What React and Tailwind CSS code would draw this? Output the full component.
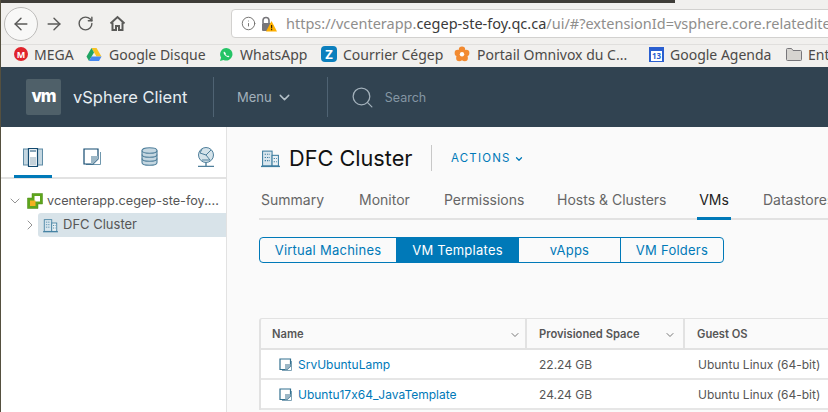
import { ArrowLeft, ArrowRight, RotateCw, Info, ChevronDown, ChevronRight, Search } from "lucide-react";

const uiFont = "font-['Noto_Sans',sans-serif]";
const appFont = "font-['Inter',sans-serif] [font-feature-settings:'calt'_0]";

const HomeIcon = () => (
   <svg width="17" height="17" viewBox="0 0 17 17" fill="none" stroke="#5a5a58" strokeWidth="2">
      <path d="M1.5 8.5 8.5 2l7 6.5" />
      <path d="M3.5 7.5V15h3.5v-4h3v4h3.5V7.5" />
   </svg>
);

const LockWarning = () => (
   <svg width="16" height="16" viewBox="0 0 16 16">
      <path d="M2 7V4.5a3 3 0 0 1 6 0V7" fill="none" stroke="#77767a" strokeWidth="1.6" />
      <rect x="1" y="7" width="9" height="8" rx="1" fill="#77767a" />
      <path d="M10.5 5 16 15.5H5z" fill="#ffb000" />
      <rect x="10" y="9" width="1.2" height="3.4" fill="#3a2a00" />
      <rect x="10" y="13" width="1.2" height="1.2" fill="#3a2a00" />
   </svg>
);

const Mega = () => (
   <span className="w-[14px] h-[14px] rounded-full bg-[#e0242c] text-white text-[9px] font-bold flex items-center justify-center leading-none">
      M
   </span>
);

const Drive = () => (
   <svg width="16" height="15" viewBox="0 0 16 15">
      <path d="M5.5 1h5l5 8.5h-5z" fill="#f7c325" />
      <path d="M5.5 1 0.5 9.5 3 14l5-8.5z" fill="#1fa463" />
      <path d="M3 14h10l2.5-4.5h-10z" fill="#4688f1" />
   </svg>
);

const Whats = () => (
   <svg width="15" height="15" viewBox="0 0 15 15">
      <path d="M7.5 1a6.3 6.3 0 0 0-5.4 9.6L1 14l3.5-1A6.3 6.3 0 1 0 7.5 1z" fill="#25c466" />
      <path d="M5 4.5c-1 1 0 3 1.500 4.300S9.500 10.700 10.500 9.800l-1.400-1.300-.8.500c-.8-.3-1.500-1-1.900-1.900l.6-.8z" fill="#fff" />
   </svg>
);

const Zimbra = () => (
   <span className="w-[16px] h-[16px] rounded-sm bg-[#0b7fbd] text-white text-[13px] font-bold flex items-center justify-center leading-none">
      Z
   </span>
);

const Flower = () => (
   <svg width="16" height="16" viewBox="0 0 16 16">
      <circle cx="8" cy="3.800" r="3.200" fill="#f28a30" />
      <circle cx="3.800" cy="7" r="3.200" fill="#f28a30" />
      <circle cx="12.200" cy="7" r="3.200" fill="#f28a30" />
      <circle cx="5.300" cy="12" r="3.200" fill="#f28a30" />
      <circle cx="10.700" cy="12" r="3.200" fill="#f28a30" />
      <circle cx="8" cy="8.300" r="2.200" fill="#fff" />
   </svg>
);

const Calendar = () => (
   <span className="w-[15px] h-[15px] bg-[#2a5fd0] flex items-end justify-center pb-px">
      <span className="bg-white text-[#2a5fd0] w-[11px] h-[10px] text-[8px] font-bold leading-[10px] text-center">13</span>
   </span>
);

const Folder = () => (
   <svg width="16" height="14" viewBox="0 0 16 14" fill="#d6d4d0" stroke="#77767a">
      <path d="M.5 2.500a1 1 0 0 1 1-1h4l1.500 2h7.500a1 1 0 0 1 1 1v8a1 1 0 0 1-1 1h-13a1 1 0 0 1-1-1z" />
   </svg>
);

const Bookmark = ({ icon, label, className }) => (
   <div className={`flex items-center gap-[6px] shrink-0 ${className}`}>
      {icon}
      <span className="text-[14px] text-[#4c4a48] whitespace-nowrap">{label}</span>
   </div>
);

const ClusterIcon = ({ size = 16 }) => (
   <svg width={size} height={size} viewBox="0 0 18 18" fill="none" stroke="#3f7ea0" strokeWidth="1">
      <rect x="1.500" y="2" width="9" height="14" fill="#d9e6ee" />
      <rect x="10.500" y="6" width="6" height="10" fill="#eaf1f5" />
      <path d="M3.500 5h5M3.500 8h5M3.500 11h5M12 9h3M12 12h3" strokeDasharray="1.200 1" />
      <path d="M0 16.500h18" strokeWidth="1.300" />
   </svg>
);

const TemplateIcon = () => (
   <svg width="14" height="14" viewBox="0 0 14 14" fill="none">
      <path d="M3 12.500h9.500V3" stroke="#7fa3b7" strokeWidth="1" />
      <path d="M1 1h10.500v7L8 11.500H1z" fill="#fff" stroke="#33708f" strokeWidth="1.200" />
      <path d="M11.500 6v2L8 11.500H6V6z" fill="#9db7c6" />
   </svg>
);

const VcenterIcon = () => (
   <svg width="16" height="16" viewBox="0 0 16 16" fill="none">
      <path d="M5 .5h10.500V11H11v4.500H.5V5H5z" fill="#5ea51c" stroke="#4a8a14" strokeWidth="0.500" />
      <rect x="7.500" y="3" width="5.500" height="5.500" fill="#fff" />
      <rect x="3" y="7.500" width="5.500" height="5.500" fill="#f4b120" />
   </svg>
);

const SideTabs = () => (
   <div className="h-[52px] shrink-0 border-b-2 border-[#e2e2e2] flex items-start">
      <div className="w-[38px] h-[51px] ml-[14px] border-b-[3px] border-[#0079b8] flex justify-center pt-[21px] -mb-px">
         <svg width="20" height="19" viewBox="0 0 20 19" fill="none">
            <rect x="0.500" y="1" width="19" height="16" fill="#c5d7e1" stroke="#5f8ca6" />
            <rect x="5.500" y="0.500" width="9" height="18" fill="#fff" stroke="#134a70" strokeWidth="1.200" />
            <rect x="7" y="9" width="6" height="8" fill="#c5d2da" />
            <path d="M7 3h6" stroke="#134a70" />
         </svg>
      </div>
      <div className="ml-[31px] pt-[21px]">
         <svg width="18" height="18" viewBox="0 0 18 18" fill="none">
            <path d="M3 16.500h14.500V4" stroke="#6f97ad" strokeWidth="1" />
            <path d="M1 1h14v10l-5 5H1z" fill="#fff" stroke="#134a70" strokeWidth="1.200" />
            <path d="M15 8v3l-5 5H8V8z" fill="#9db7c6" />
         </svg>
      </div>
      <div className="ml-[40px] pt-[20px]">
         <svg width="17" height="19" viewBox="0 0 17 19" fill="#c5d7e1" stroke="#4f7f9b" strokeWidth="1.100">
            <path d="M1 3.500v12c0 1.500 3 2.800 7.500 2.800S16 17 16 15.500v-12" />
            <ellipse cx="8.500" cy="3.500" rx="7.500" ry="2.800" />
            <path d="M1 7.500c0 1.500 3 2.800 7.500 2.800S16 9 16 7.500M1 11.500c0 1.500 3 2.800 7.500 2.800S16 13 16 11.500" fill="none" />
         </svg>
      </div>
      <div className="ml-[39px] pt-[20px]">
         <svg width="18" height="20" viewBox="0 0 18 20" fill="none" stroke="#4f7f9b" strokeWidth="1">
            <circle cx="9" cy="8" r="7.500" fill="#d5e3ea" />
            <path d="M9 8 14 3M9 8l4 5M9 8 3 6M3 6l2-4M13 13l-8 0" />
            <path d="M9 15.500V19M1 19.500h16" strokeWidth="1.400" />
         </svg>
      </div>
   </div>
);

const Tree = () => (
   <div className="pt-[9px] flex flex-col">
      <div className="h-[25px] flex items-center pl-[7px]">
         <ChevronDown size={16} strokeWidth={1.4} color="#8c8c8c" className="shrink-0" />
         <span className="ml-[4px] shrink-0"><VcenterIcon /></span>
         <span className="ml-[4px] text-[12.700px] text-[#565656] whitespace-nowrap">vcenterapp.cegep-ste-foy....</span>
      </div>
      <div className="h-[24px] flex items-center pl-[22px]">
         <ChevronRight size={16} strokeWidth={1.4} color="#8c8c8c" className="shrink-0" />
         <div className="h-[24px] flex-1 bg-[#d8e3e9] rounded-l-[3px] flex items-center pl-[5px] gap-[5px]">
            <ClusterIcon size={15} />
            <span className="text-[13px] text-[#565656]">DFC Cluster</span>
         </div>
      </div>
   </div>
);

const tabs = [
   { label: "Summary", width: "w-[98px]" },
   { label: "Monitor", width: "w-[85px]" },
   { label: "Permissions", width: "w-[113px]" },
   { label: "Hosts & Clusters", width: "w-[142px]" },
];

const Tabs = () => (
   <div className="mt-[11px] ml-[32px] h-[38px] shrink-0 border-b-2 border-[#e2e2e2] flex items-stretch pl-[2px] text-[14px] text-[#666]">
      {tabs.map((t) => (
         <div key={t.label} className={`${t.width} shrink-0 pt-[7px] whitespace-nowrap`}>{t.label}</div>
      ))}
      <div className="w-[66px] shrink-0 -ml-[2px]">
         <div className="w-[34px] h-[38px] pt-[7px] text-center text-[#222] border-b-[3px] border-[#0079b8]">VMs</div>
      </div>
      <div className="pt-[7px] whitespace-nowrap">Datastores</div>
   </div>
);

const segments = [
   { label: "Virtual Machines", width: "w-[136px]", active: false },
   { label: "VM Templates", width: "w-[122px]", active: true },
   { label: "vApps", width: "w-[102px]", active: false },
   { label: "VM Folders", width: "w-[103px]", active: false },
];

const Segments = () => (
   <div className="mt-[17px] ml-[32px] flex h-[26px] shrink-0 w-[465px] border border-[#0079b8] rounded-[4px] overflow-hidden text-[13px] tracking-[0.25px]">
      {segments.map((s, i) => (
         <div
            key={s.label}
            className={`${s.width} shrink-0 flex items-center justify-center pt-[2px] ${i > 0 ? "border-l border-[#0079b8]" : ""} ${s.active ? "bg-[#0079b8] text-white" : "text-[#0079b8]"}`}
         >
            {s.label}
         </div>
      ))}
   </div>
);

const rows = [
   { name: "SrvUbuntuLamp", size: "22.24 GB", os: "Ubuntu Linux (64-bit)" },
   { name: "Ubuntu17x64_JavaTemplate", size: "24.24 GB", os: "Ubuntu Linux (64-bit)" },
];

const Table = () => (
   <div className="mt-[55px] ml-[32px] shrink-0 border-t border-l-2 border-[#e2e2e2] rounded-tl-[3px] text-[12px]">
      <div className="h-[29px] flex border-b-2 border-[#e2e2e2] box-content font-semibold text-[#565656] text-[11.200px]">
         <div className="w-[266px] shrink-0 flex items-center justify-between pl-[11px] pr-[4px] pt-[2px] border-r-2 border-[#e2e2e2]">
            Name
            <ChevronDown size={12} color="#777" />
         </div>
         <div className="w-[158px] shrink-0 flex items-center justify-between pl-[12px] pr-[7px] pt-[2px] border-r-2 border-[#e2e2e2]">
            Provisioned Space
            <ChevronDown size={12} color="#777" />
         </div>
         <div className="flex items-center pl-[12px] pt-[2px]">Guest OS</div>
      </div>
      {rows.map((r) => (
         <div key={r.name} className="h-[30px] flex items-center pt-[2px] bg-white border-b-2 border-[#e6e6e6]">
            <div className="w-[266px] shrink-0 flex items-center pl-[18px] gap-[5px] text-[#0079b8]">
               <TemplateIcon />
               {r.name}
            </div>
            <div className="w-[158px] shrink-0 pl-[12px] text-[#565656]">{r.size}</div>
            <div className="pl-[13px] text-[#565656] whitespace-nowrap">{r.os}</div>
         </div>
      ))}
   </div>
);

const App = () => {
   return (
      <div className="relative w-[828px] h-[412px] overflow-hidden flex flex-col bg-[#fafafa]">
         <div className="absolute left-0 top-0 bottom-0 w-px bg-[#55503f]" />
         <div className="h-[3px] shrink-0 bg-[#f1f0ee]">
            <div className="w-[675px] h-[3px] bg-[#3f3d38]" />
         </div>

         {/* browser chrome */}
         <div className={`${uiFont} bg-[#f1f0ee] shrink-0`}>
            <div className="h-[41px] flex items-center pl-[4px]">
               <div className="w-[34px] h-[34px] rounded-full border border-[#bdbcba] bg-[#f8f8f7] flex items-center justify-center">
                  <ArrowLeft size={20} color="#5a5a58" strokeWidth={1.7} />
               </div>
               <ArrowRight size={20} color="#5a5a58" strokeWidth={1.7} className="ml-[6px]" />
               <RotateCw size={17} color="#5a5a58" strokeWidth={2} className="ml-[13px]" />
               <span className="ml-[15px]"><HomeIcon /></span>
               <div className="ml-[105px] flex-1 h-[29px] -mr-[4px] bg-white border border-[#d2d1cf] rounded-[4px] flex items-center pl-[9px] overflow-hidden whitespace-nowrap">
                  <Info size={15} color="#6f6e6c" strokeWidth={1.5} className="shrink-0" />
                  <span className="ml-[5px] shrink-0"><LockWarning /></span>
                  <span className="ml-[9px] text-[14.500px] text-[#8f8e8c]">
                     https://vcenterapp.<span className="text-[#3a3a3a]">cegep-ste-foy.qc.ca</span>/ui/#?extensionId=vsphere.core.relatedite
                  </span>
               </div>
            </div>
            <div className="h-[23px] flex items-center border-t border-[#e0dfdd] pl-[14px] pb-[4px] overflow-hidden">
               <Bookmark icon={<Mega />} label="MEGA" className="w-[72px]" />
               <Bookmark icon={<Drive />} label="Google Disque" className="w-[133px] gap-[7px]" />
               <Bookmark icon={<Whats />} label="WhatsApp" className="w-[102px] gap-[4px]" />
               <Bookmark icon={<Zimbra />} label="Courrier Cégep" className="w-[133px] gap-[5px]" />
               <Bookmark icon={<Flower />} label="Portail Omnivox du C..." className="w-[195px] gap-[7px]" />
               <Bookmark icon={<Calendar />} label="Google Agenda" className="w-[137px] gap-[5px]" />
               <Bookmark icon={<Folder />} label="Ent" />
            </div>
         </div>

         {/* vsphere header */}
         <div className={`${appFont} h-[60px] shrink-0 bg-[#314351] flex items-center pl-[26px]`}>
            <div className="w-[35px] h-[36px] rounded-[2px] bg-[#4f6069] flex items-center justify-center text-white text-[17px] font-extrabold tracking-[-1px]">
               vm
            </div>
            <span className="ml-[12px] text-[16.500px] text-[#e6edf1] w-[140px] whitespace-nowrap">vSphere Client</span>
            <div className="w-px h-[40px] bg-[#4f6373]" />
            <span className="ml-[23px] mt-[2px] text-[13px] text-[#a3b1bb]">Menu</span>
            <ChevronDown size={17} color="#b5c1c9" className="ml-[4px] mt-[1px]" />
            <div className="ml-[34px] w-px h-[40px] bg-[#4f6373]" />
            <Search size={25} color="#a3b1bb" strokeWidth={1.2} className="ml-[22px]" />
            <span className="ml-[10px] mt-[2px] text-[12.500px] text-[#8496a3]">Search</span>
         </div>

         <div className={`${appFont} flex-1 flex min-h-0`}>
            <div className="w-[227px] shrink-0 bg-white border-r border-[#e2e2e2] flex flex-col">
               <SideTabs />
               <Tree />
            </div>

            <div className="flex-1 min-w-0 flex flex-col">
               <div className="mt-[18px] ml-[34px] h-[26px] shrink-0 flex items-center">
                  <ClusterIcon size={19} />
                  <span className="ml-[9px] text-[21.700px] text-[#111] w-[142px] whitespace-nowrap">DFC Cluster</span>
                  <div className="w-px h-[26px] bg-[#c8c8c8]" />
                  <span className="ml-[19px] mt-[2px] text-[11.500px] tracking-[1.200px] text-[#0079b8]">ACTIONS</span>
                  <ChevronDown size={10} strokeWidth={3} color="#0079b8" className="ml-[3px] mt-[1px]" />
               </div>
               <Tabs />
               <Segments />
               <Table />
            </div>
         </div>
      </div>
   );
};

export default App;
